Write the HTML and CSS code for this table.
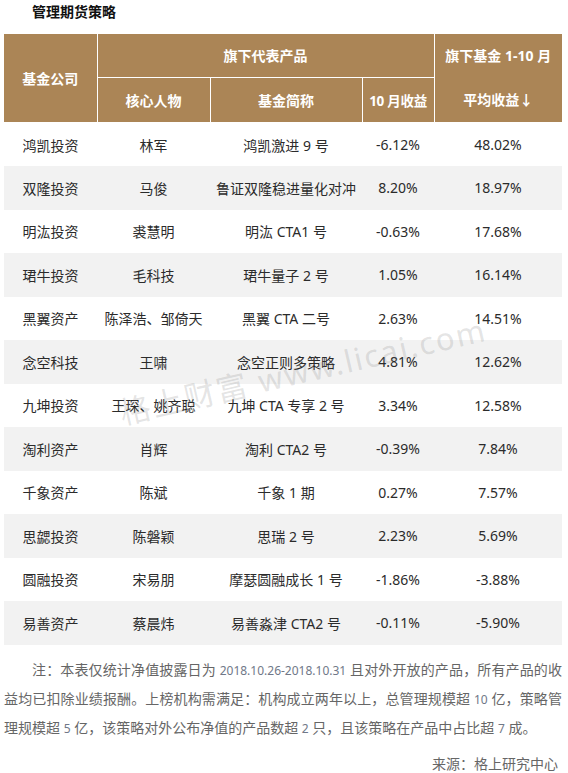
FILE: index.html
```html
<!DOCTYPE html>
<html lang="zh">
<head>
<meta charset="UTF-8">
<meta name="viewport" content="width=device-width,initial-scale=1">
<title>管理期货策略</title>
<link rel="stylesheet" href="styles.css">
</head>
<body>
<div class="page">
  <h2 class="title">管理期货策略</h2>

  <table class="rank">
    <colgroup>
      <col class="c1"><col class="c2"><col class="c3"><col class="c4"><col class="c5">
    </colgroup>
    <thead>
      <tr class="h1">
        <th rowspan="2">基金公司</th>
        <th colspan="3">旗下代表产品</th>
        <th rowspan="2" class="avg"><span>旗下基金 1-10 月</span><span>平均收益↓</span></th>
      </tr>
      <tr class="h2">
        <th>核心人物</th>
        <th>基金简称</th>
        <th class="narrow">10 月收益</th>
      </tr>
    </thead>
    <tbody>
      <tr><td>鸿凯投资</td><td>林军</td><td>鸿凯激进 9 号</td><td>-6.12%</td><td>48.02%</td></tr>
      <tr><td>双隆投资</td><td>马俊</td><td>鲁证双隆稳进量化对冲</td><td>8.20%</td><td>18.97%</td></tr>
      <tr><td>明汯投资</td><td>裘慧明</td><td>明汯 CTA1 号</td><td>-0.63%</td><td>17.68%</td></tr>
      <tr><td>珺牛投资</td><td>毛科技</td><td>珺牛量子 2 号</td><td>1.05%</td><td>16.14%</td></tr>
      <tr><td>黑翼资产</td><td>陈泽浩、邹倚天</td><td>黑翼 CTA 二号</td><td>2.63%</td><td>14.51%</td></tr>
      <tr><td>念空科技</td><td>王啸</td><td>念空正则多策略</td><td>4.81%</td><td>12.62%</td></tr>
      <tr><td>九坤投资</td><td>王琛、姚齐聪</td><td>九坤 CTA 专享 2 号</td><td>3.34%</td><td>12.58%</td></tr>
      <tr><td>淘利资产</td><td>肖辉</td><td>淘利 CTA2 号</td><td>-0.39%</td><td>7.84%</td></tr>
      <tr><td>千象资产</td><td>陈斌</td><td>千象 1 期</td><td>0.27%</td><td>7.57%</td></tr>
      <tr><td>思勰投资</td><td>陈磐颖</td><td>思瑞 2 号</td><td>2.23%</td><td>5.69%</td></tr>
      <tr><td>圆融投资</td><td>宋易朋</td><td>摩瑟圆融成长 1 号</td><td>-1.86%</td><td>-3.88%</td></tr>
      <tr><td>易善资产</td><td>蔡晨炜</td><td>易善淼津 CTA2 号</td><td>-0.11%</td><td>-5.90%</td></tr>
    </tbody>
  </table>

  <p class="note">注：本表仅统计净值披露日为 <span class="num">2018.10.26-2018.10.31</span> 且对外开放的产品，所有产品的收益均已扣除业绩报酬。上榜机构需满足：机构成立两年以上，总管理规模超 <span class="num">10</span> 亿，策略管理规模超 <span class="num">5</span> 亿，该策略对外公布净值的产品数超 <span class="num">2</span> 只，且该策略在产品中占比超 <span class="num">7</span> 成。</p>
  <p class="source">来源：格上研究中心</p>

  <div class="mark">格上财富 www.licai.com</div>
</div>
</body>
</html>
```

FILE: styles.css
```css
:root{--brown:#ab8556;--stripe:#f2f2f2;--txt:#2b2b2b;--sub:#666}
*{box-sizing:border-box;margin:0;padding:0}
body{background:#fff;color:var(--txt);font-family:"Noto Sans","Noto Sans CJK SC",sans-serif;font-size:14px}
.page{position:relative;margin:0 6px 0 4px}
.title{font-size:14px;font-weight:700;color:#111;line-height:24px;padding-left:28px}

.rank{width:100%;margin-top:10px;border-collapse:collapse;table-layout:fixed}
.rank .c1{width:93px}
.rank .c2{width:113px}
.rank .c3{width:152px}
.rank .c4{width:72px}
.rank .c5{width:128px}
.rank th{background:var(--brown);color:#fff;font-weight:700;font-size:14px;border:1px solid #fff;text-align:center;vertical-align:middle;white-space:nowrap;padding:0}
.rank thead tr:first-child th{border-top:none}
.rank th:first-child{border-left:none}
.rank .h1 th:last-child{border-right:none}
.rank .h1{height:43px}
.rank .h2{height:45px}
.rank .narrow{font-size:13.5px;letter-spacing:-.3px}
.rank .avg span{display:block;line-height:44px}
.rank td{height:43.5px;text-align:center;vertical-align:middle;white-space:nowrap;padding:0;color:var(--txt)}
.rank tbody tr:nth-child(even){background:var(--stripe)}

.note{margin-top:11px;color:var(--sub);line-height:28px;text-indent:2em;text-align:justify}
.num{font-size:12px;color:#707888}
.source{margin-top:7px;color:var(--sub);line-height:28px;text-align:right;padding-right:4px}

.mark{position:absolute;left:116px;top:398px;font-size:31px;line-height:31px;color:rgba(120,120,120,.2);transform:rotate(-13deg);transform-origin:left center;white-space:nowrap;pointer-events:none;letter-spacing:2px}
```
